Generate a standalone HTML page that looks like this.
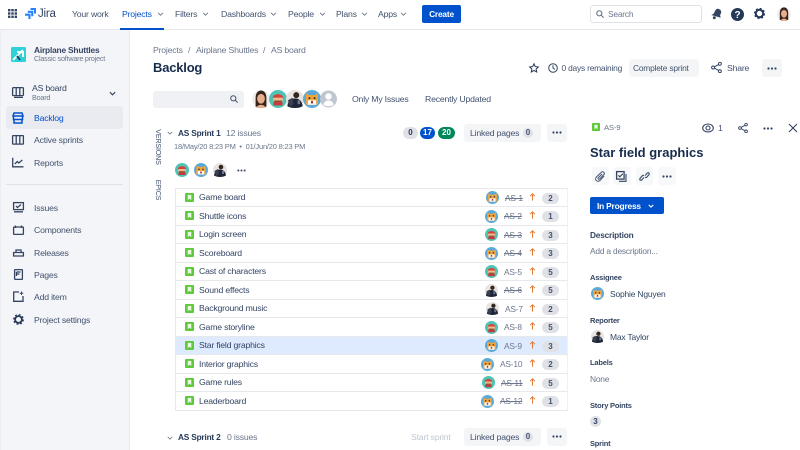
<!DOCTYPE html>
<html lang="en"><head><meta charset="utf-8"><title>Backlog</title>
<style>
*{box-sizing:border-box}
html,body{margin:0;padding:0;width:800px;height:450px;overflow:hidden;background:#fff}
body{font-family:"Liberation Sans",sans-serif;color:#42526e;position:relative}
.t{position:absolute;white-space:nowrap;line-height:12px;font-size:8.7px;letter-spacing:-.2px}
.s{color:#344563}
.m{color:#6b778c;font-size:8.4px}
.x{text-decoration:line-through}
.b{position:absolute;background:#f4f5f7;border-radius:3px}
svg{position:absolute;overflow:visible}
.ic{fill:none;stroke:#344563;stroke-width:1.3}
.row{position:absolute;left:175px;width:393px;height:18.5px;border-bottom:1px solid #e6e8ec;border-left:1px solid #e6e8ec;border-right:1px solid #eef0f3}
.pill{position:absolute;height:11px;width:17px;border-radius:6px;background:#dfe1e6;color:#42526e;font-size:8px;font-weight:bold;line-height:11px;text-align:center}
.cnt{position:absolute;height:12px;border-radius:6px;font-size:8px;font-weight:bold;line-height:12px;text-align:center}
.lab{font-weight:bold;font-size:7.5px;color:#344563}
.h{font-weight:bold;font-size:8.3px;color:#253858}
</style></head><body>
<svg width="0" height="0" style="position:absolute">
<defs>
<symbol id="cat" viewBox="0 0 14 14"><circle cx="7" cy="7" r="7" fill="#5ba9d6"/><path d="M2.300 2.500l2.500 1.500h4.400l2.500-1.500v9H2.300z" fill="#f2a33a"/><rect x="3.800" y="8" width="6.400" height="3.500" fill="#fff"/><circle cx="5" cy="6.300" r=".8" fill="#333"/><circle cx="9" cy="6.300" r=".8" fill="#333"/><rect x="6.200" y="8.500" width="1.600" height="2" fill="#a33"/></symbol>
<symbol id="mar" viewBox="0 0 14 14"><circle cx="7" cy="7" r="7" fill="#4fc4b5"/><path d="M2.800 6C3 2.400 11 2.400 11.200 6z" fill="#d6423a"/><rect x="3.300" y="6" width="7.400" height="3" fill="#f3b98c"/><rect x="4" y="8.200" width="6" height="1.200" fill="#8a4a32"/><path d="M3.500 9.400h7V12h-7z" fill="#c9393a"/></symbol>
<symbol id="pho" viewBox="0 0 14 14"><circle cx="7" cy="7" r="7" fill="#e7e4e2"/><path d="M1 12.500C1.500 8 4.500 6.500 7 6.500s5.500 1.500 6 6c-3 2-9 2-12 0z" fill="#1f2538"/><circle cx="8" cy="4" r="2.300" fill="#33261f"/><path d="M1.500 8l3.500-2 1 5-3 2z" fill="#3c3f52"/><rect x="9" y="8" width="2" height="3" fill="#70778a"/></symbol>
<symbol id="wom" viewBox="0 0 14 14"><circle cx="7" cy="7" r="7" fill="#f1efed"/><path d="M2.800 13V6c0-7.500 8.400-7.500 8.400 0v7z" fill="#38241c"/><ellipse cx="7" cy="6.800" rx="3" ry="3.800" fill="#e6b08f"/><path d="M3.500 14c.5-3.200 6.500-3.200 7 0z" fill="#e6b08f"/></symbol>
<symbol id="st" viewBox="0 0 9 9"><rect width="9" height="9" rx="1" fill="#5ec93a"/><path d="M2.700 1.900h3.600v5.200L4.500 5.800 2.700 7.100z" fill="#e9f8e2"/></symbol>
<symbol id="arr" viewBox="0 0 8 10"><path d="M4 9.500V1M1 4l3-3 3 3" fill="none" stroke="#e0762d" stroke-width="1.200"/></symbol>
<symbol id="dots" viewBox="0 0 10 3"><circle cx="1.500" cy="1.500" r="1.100" fill="#344563"/><circle cx="5" cy="1.500" r="1.100" fill="#344563"/><circle cx="8.500" cy="1.500" r="1.100" fill="#344563"/></symbol>
<symbol id="chev" viewBox="0 0 8 5"><path d="M1 1l3 3 3-3" fill="none" stroke="#6b778c" stroke-width="1.100"/></symbol>
<symbol id="share" viewBox="0 0 12 12"><circle cx="2.300" cy="6" r="1.600" fill="none" stroke="#344563" stroke-width="1.100"/><circle cx="9.700" cy="2" r="1.600" fill="none" stroke="#344563" stroke-width="1.100"/><circle cx="9.700" cy="10" r="1.600" fill="none" stroke="#344563" stroke-width="1.100"/><path d="M3.800 5.200l4.500-2.400M3.800 6.800l4.500 2.400" stroke="#344563" stroke-width="1.100"/></symbol>
</defs></svg>

<!-- top nav -->
<div style="position:absolute;left:0;top:0;width:800px;height:30px;border-bottom:1px solid #e6e8ec;background:#fff"></div>
<svg style="left:8px;top:9px" width="9" height="9" viewBox="0 0 9 9" fill="#344563"><rect width="2.400" height="2.400"/><rect x="3.300" width="2.400" height="2.400"/><rect x="6.600" width="2.400" height="2.400"/><rect y="3.300" width="2.400" height="2.400"/><rect x="3.300" y="3.300" width="2.400" height="2.400"/><rect x="6.600" y="3.300" width="2.400" height="2.400"/><rect y="6.600" width="2.400" height="2.400"/><rect x="3.300" y="6.600" width="2.400" height="2.400"/><rect x="6.600" y="6.600" width="2.400" height="2.400"/></svg>
<svg style="left:25px;top:8px" width="11" height="11" viewBox="0 0 11 11" fill="#2684ff"><path d="M5.500 0H11v5.500H9V2H5.500z"/><path d="M2.800 2.800h5.500v5.500H6.200V4.900H2.800z"/><path d="M0 5.600h5.500V11H3.400V7.700H0z"/></svg>
<div class="t s" style="left:38px;top:7px;font-size:11.500px;line-height:14px">Jira</div>
<div class="t" style="left:72px;top:8px">Your work</div>
<div class="t" style="left:122px;top:8px;color:#0052cc">Projects</div>
<svg style="left:157px;top:12px" width="7" height="4"><use href="#chev"/></svg>
<div style="position:absolute;left:120px;top:28px;width:44px;height:2px;background:#0052cc"></div>
<div class="t" style="left:175px;top:8px">Filters</div>
<svg style="left:202px;top:12px" width="7" height="4"><use href="#chev"/></svg>
<div class="t" style="left:221px;top:8px">Dashboards</div>
<svg style="left:270px;top:12px" width="7" height="4"><use href="#chev"/></svg>
<div class="t" style="left:288px;top:8px">People</div>
<svg style="left:319px;top:12px" width="7" height="4"><use href="#chev"/></svg>
<div class="t" style="left:336px;top:8px">Plans</div>
<svg style="left:361px;top:12px" width="7" height="4"><use href="#chev"/></svg>
<div class="t" style="left:378px;top:8px">Apps</div>
<svg style="left:400px;top:12px" width="7" height="4"><use href="#chev"/></svg>
<div style="position:absolute;left:422px;top:5px;width:39px;height:18px;background:#0052cc;border-radius:2px;color:#fff;font-size:8.400px;letter-spacing:-.2px;line-height:18px;text-align:center;font-weight:bold">Create</div>
<div style="position:absolute;left:590px;top:5px;width:112px;height:18px;border:1px solid #dfe1e6;border-radius:3px;background:#fff"></div>
<svg style="left:596px;top:10px" width="8" height="8" viewBox="0 0 8 8"><circle cx="3.300" cy="3.300" r="2.600" fill="none" stroke="#5e6c84"/><path d="M5.200 5.200L7.600 7.600" stroke="#5e6c84"/></svg>
<div class="t" style="left:608px;top:7.500px;font-size:8.400px;color:#6b778c">Search</div>
<svg style="left:710px;top:8px" width="12" height="12" viewBox="0 0 12 12" fill="#344563"><path d="M8 .8c2 .4 3.400 1.800 3.200 3.600-.1 1.300-1 1.700-1.100 3.200l.6 2.100L1.300 7l2.200-1.100C5 4.200 5.200.4 8 .8z"/><circle cx="4.300" cy="9.800" r="1.500"/></svg>
<svg style="left:731px;top:8px" width="13" height="13" viewBox="0 0 13 13"><circle cx="6.500" cy="6.500" r="6.500" fill="#253858"/><text x="6.500" y="10" font-size="10" font-weight="bold" fill="#fff" text-anchor="middle" font-family="Liberation Sans">?</text></svg>
<svg style="left:754px;top:8px" width="11" height="11" viewBox="0 0 11 11"><circle cx="5.500" cy="5.500" r="3.700" fill="none" stroke="#253858" stroke-width="2"/><circle cx="5.500" cy="5.500" r="5" fill="none" stroke="#253858" stroke-width="1.200" stroke-dasharray="2 1.930"/></svg>
<svg style="left:777px;top:7px" width="14" height="14"><use href="#wom"/></svg>

<!-- sidebar -->
<div style="position:absolute;left:0;top:30px;width:130px;height:420px;background:#f4f5f8;border-left:1px solid #eceef1;border-right:1px solid #e6e8ec"></div>
<svg style="left:11px;top:47px" width="15" height="15" viewBox="0 0 15 15"><rect width="15" height="15" rx="1.500" fill="#2fd0d8"/><path d="M2 13L12 3M6 5h6v5" stroke="#fff" stroke-width="1.800" fill="none"/><path d="M6 9l3 4" stroke="#253858" stroke-width="1.800"/></svg>
<div class="t" style="left:34px;top:44px;font-size:8.400px;color:#344563;font-weight:bold">Airplane Shuttles</div>
<div class="t" style="left:34px;top:53px;font-size:7.200px;color:#6b778c">Classic software project</div>
<svg class="ic" style="left:12px;top:87px" width="12" height="11" viewBox="0 0 12 11"><rect x=".6" y=".6" width="10.800" height="8" rx="1"/><path d="M4.200 .6v8M7.800 .6v8M2 10.400h9"/></svg>
<div class="t s" style="left:32px;top:82px">AS board</div>
<div class="t" style="left:32px;top:92px;font-size:7.200px;color:#6b778c">Board</div>
<svg style="left:109px;top:91px" width="7" height="5" viewBox="0 0 8 5"><path d="M1 1l3 3 3-3" fill="none" stroke="#344563" stroke-width="1.300"/></svg>
<div style="position:absolute;left:6px;top:106px;width:117px;height:23px;background:#e9ebf0;border-radius:3px"></div>
<svg style="left:12px;top:112px" width="12" height="12" viewBox="0 0 12 12" fill="none" stroke="#0052cc" stroke-width="1.500"><path d="M2 1h8l1 3H1zM1.500 4.500v3h9v-3M2 7.500V11h8V7.500"/></svg>
<div class="t" style="left:34px;top:112px;color:#0052cc">Backlog</div>
<svg class="ic" style="left:12px;top:135px" width="12" height="10" viewBox="0 0 12 10"><rect x=".6" y=".6" width="10.800" height="8.500" rx=".5"/><path d="M4.200 .6v8.500M7.800 .6v8.500"/></svg>
<div class="t" style="left:34px;top:134px">Active sprints</div>
<svg class="ic" style="left:12px;top:157px" width="12" height="11" viewBox="0 0 12 11"><path d="M.7 .8V9.800H11.500M2.800 7l2.500-2.500 1.500 1.500 3.500-3"/></svg>
<div class="t" style="left:34px;top:157px">Reports</div>
<div style="position:absolute;left:6px;top:184px;width:117px;height:1px;background:#dfe1e6"></div>
<svg class="ic" style="left:13px;top:202px" width="11" height="11" viewBox="0 0 11 11"><rect x=".6" y=".6" width="9.800" height="7"/><path d="M3 4l1.500 1.500L8 2.500M1 9.800h9"/></svg>
<div class="t" style="left:34px;top:202px">Issues</div>
<svg class="ic" style="left:13px;top:225px" width="11" height="10" viewBox="0 0 11 10"><rect x=".6" y="2" width="9.800" height="7.400" rx=".6"/><path d="M2.500 .5v2.500M8.500 .5v2.500"/></svg>
<div class="t" style="left:34px;top:224px">Components</div>
<svg class="ic" style="left:13px;top:248px" width="11" height="9" viewBox="0 0 11 9"><path d="M.6 4.500h9.800v3.500H.6zM3 4.500V2h5v2.500"/></svg>
<div class="t" style="left:34px;top:247px">Releases</div>
<svg class="ic" style="left:14px;top:269px" width="9" height="11" viewBox="0 0 9 11"><rect x=".6" y=".6" width="7.800" height="9.800" rx=".6"/><path d="M2.500 3h4M2.500 5h3M2.500 3v4"/></svg>
<div class="t" style="left:34px;top:269px">Pages</div>
<svg class="ic" style="left:13px;top:291px" width="11" height="11" viewBox="0 0 11 11"><path d="M6 1H.7v9.300H10V5"/><path d="M8.500 .5v3.500M6.800 2.200h3.500" stroke-width="1"/></svg>
<div class="t" style="left:34px;top:291px">Add item</div>
<svg style="left:13px;top:314px" width="11" height="11" viewBox="0 0 11 11"><circle cx="5.500" cy="5.500" r="3.400" fill="none" stroke="#253858" stroke-width="1.800"/><circle cx="5.500" cy="5.500" r="4.800" fill="none" stroke="#253858" stroke-width="1.200" stroke-dasharray="2 1.770"/></svg>
<div class="t" style="left:34px;top:314px">Project settings</div>

<!-- header -->
<div class="t" style="left:153px;top:44px;color:#6b778c">Projects</div>
<div class="t" style="left:188px;top:44px;color:#6b778c">/</div>
<div class="t" style="left:196px;top:44px;color:#6b778c">Airplane Shuttles</div>
<div class="t" style="left:263px;top:44px;color:#6b778c">/</div>
<div class="t" style="left:271px;top:44px;color:#6b778c">AS board</div>
<div class="t" style="left:153px;top:59px;font-size:13px;line-height:17px;color:#172b4d;font-weight:bold">Backlog</div>
<svg style="left:529px;top:63px" width="10" height="10" viewBox="0 0 10 10"><path d="M5 .8l1.300 2.800 3 .4-2.200 2 .6 3L5 7.500 2.300 9l.6-3-2.200-2 3-.4z" fill="none" stroke="#253858" stroke-width="1"/></svg>
<svg style="left:548px;top:63px" width="10" height="10" viewBox="0 0 10 10"><circle cx="5" cy="5" r="4.300" fill="none" stroke="#344563"/><path d="M5 2.300V5l1.800 1.300" fill="none" stroke="#344563"/></svg>
<div class="t" style="left:561.500px;top:62px;font-size:8.400px">0 days remaining</div>
<div class="b" style="left:629px;top:59px;width:70px;height:18px"></div>
<div class="t" style="left:633px;top:62px;font-size:8.400px">Complete sprint</div>
<svg style="left:711px;top:62px" width="11" height="11"><use href="#share"/></svg>
<div class="t" style="left:727px;top:62px">Share</div>
<div class="b" style="left:762px;top:59px;width:20px;height:18px"></div>
<svg style="left:767px;top:66.500px" width="10" height="3"><use href="#dots"/></svg>

<!-- filters -->
<div class="b" style="left:153px;top:91px;width:91px;height:17px;background:#f0f1f4"></div>
<svg style="left:230px;top:95px" width="8" height="8" viewBox="0 0 8 8"><circle cx="3.300" cy="3.300" r="2.600" fill="none" stroke="#42526e"/><path d="M5.200 5.200L7.600 7.600" stroke="#42526e"/></svg>
<svg style="left:252px;top:90px" width="18" height="18"><use href="#wom"/></svg>
<svg style="left:269px;top:90px" width="18" height="18"><use href="#mar"/></svg>
<svg style="left:286px;top:90px" width="18" height="18"><use href="#pho"/></svg>
<svg style="left:303px;top:90px" width="18" height="18"><use href="#cat"/></svg>
<svg style="left:320px;top:90px" width="17" height="18" viewBox="0 0 17 18"><circle cx="8.500" cy="9" r="8.500" fill="#c1c7d0"/><circle cx="8.500" cy="6.500" r="3.200" fill="#fff"/><path d="M3.500 15c0-6 10-6 10 0-3 1.600-7 1.600-10 0z" fill="#fff"/></svg>
<div class="t" style="left:352px;top:93px">Only My Issues</div>
<div class="t" style="left:425px;top:93px">Recently Updated</div>

<!-- sprint 1 -->
<div class="t" style="left:138px;top:140.500px;width:40px;font-size:7.200px;transform:rotate(90deg);text-align:center">VERSIONS</div>
<div class="t" style="left:143px;top:184px;width:30px;font-size:7.200px;transform:rotate(90deg);text-align:center">EPICS</div>
<svg style="left:167px;top:131px" width="6" height="4"><use href="#chev"/></svg>
<div class="t h" style="left:178px;top:127px">AS Sprint 1</div>
<div class="t" style="left:226px;top:127px;color:#6b778c">12 issues</div>
<div class="t" style="left:174px;top:141px;font-size:7.500px;color:#6b778c">18/May/20 8:23 PM &nbsp;•&nbsp; 01/Jun/20 8:23 PM</div>
<svg style="left:175px;top:163px" width="14" height="14"><use href="#mar"/></svg>
<svg style="left:194px;top:163px" width="14" height="14"><use href="#cat"/></svg>
<svg style="left:213px;top:163px" width="14" height="14"><use href="#pho"/></svg>
<svg style="left:237px;top:168.500px" width="9" height="3"><use href="#dots"/></svg>
<div class="cnt" style="left:403px;top:127px;width:15px;background:#dfe1e6;color:#253858">0</div>
<div class="cnt" style="left:420px;top:127px;width:15px;background:#0052cc;color:#fff">17</div>
<div class="cnt" style="left:438px;top:127px;width:17px;background:#00875a;color:#fff">20</div>
<div class="b" style="left:464px;top:124px;width:77px;height:18px"></div>
<div class="t" style="left:470px;top:127px">Linked pages</div>
<div class="cnt" style="left:523px;top:128px;width:10px;height:10px;line-height:10px;background:#dfe1e6;color:#42526e">0</div>
<div class="b" style="left:547px;top:124px;width:20px;height:18px"></div>
<svg style="left:552px;top:131px" width="10" height="3"><use href="#dots"/></svg>

<!-- table -->
<div style="position:absolute;left:175px;top:188px;width:393px;height:1px;background:#e6e8ec"></div>
<div class="row" style="top:188.500px"></div>
<div class="row" style="top:207px"></div>
<div class="row" style="top:225.500px"></div>
<div class="row" style="top:244px"></div>
<div class="row" style="top:262.500px"></div>
<div class="row" style="top:281px"></div>
<div class="row" style="top:299.500px"></div>
<div class="row" style="top:318px"></div>
<div class="row" style="top:336.500px;background:#deebff"></div>
<div class="row" style="top:355px"></div>
<div class="row" style="top:373.500px"></div>
<div class="row" style="top:392px"></div>

<svg style="left:185px;top:193px" width="9" height="9"><use href="#st"/></svg><div class="t s" style="left:199px;top:191px">Game board</div>
<svg style="left:185px;top:211px" width="9" height="9"><use href="#st"/></svg><div class="t s" style="left:199px;top:210px">Shuttle icons</div>
<svg style="left:185px;top:230px" width="9" height="9"><use href="#st"/></svg><div class="t s" style="left:199px;top:228px">Login screen</div>
<svg style="left:185px;top:248px" width="9" height="9"><use href="#st"/></svg><div class="t s" style="left:199px;top:247px">Scoreboard</div>
<svg style="left:185px;top:267px" width="9" height="9"><use href="#st"/></svg><div class="t s" style="left:199px;top:265px">Cast of characters</div>
<svg style="left:185px;top:285px" width="9" height="9"><use href="#st"/></svg><div class="t s" style="left:199px;top:284px">Sound effects</div>
<svg style="left:185px;top:304px" width="9" height="9"><use href="#st"/></svg><div class="t s" style="left:199px;top:302px">Background music</div>
<svg style="left:185px;top:322px" width="9" height="9"><use href="#st"/></svg><div class="t s" style="left:199px;top:321px">Game storyline</div>
<svg style="left:185px;top:341px" width="9" height="9"><use href="#st"/></svg><div class="t s" style="left:199px;top:339px">Star field graphics</div>
<svg style="left:185px;top:359px" width="9" height="9"><use href="#st"/></svg><div class="t s" style="left:199px;top:358px">Interior graphics</div>
<svg style="left:185px;top:378px" width="9" height="9"><use href="#st"/></svg><div class="t s" style="left:199px;top:376px">Game rules</div>
<svg style="left:185px;top:396px" width="9" height="9"><use href="#st"/></svg><div class="t s" style="left:199px;top:395px">Leaderboard</div>

<svg style="left:486px;top:191px" width="13" height="13"><use href="#cat"/></svg><div class="t m x" style="left:505px;top:192px">AS-1</div><svg style="left:529px;top:193px" width="7" height="8"><use href="#arr"/></svg><div class="pill" style="left:542px;top:192.500px">2</div>
<svg style="left:485px;top:210px" width="13" height="13"><use href="#cat"/></svg><div class="t m x" style="left:504px;top:210px">AS-2</div><svg style="left:529px;top:211px" width="7" height="8"><use href="#arr"/></svg><div class="pill" style="left:542px;top:211px">1</div>
<svg style="left:485px;top:228px" width="13" height="13"><use href="#mar"/></svg><div class="t m x" style="left:504px;top:229px">AS-3</div><svg style="left:529px;top:230px" width="7" height="8"><use href="#arr"/></svg><div class="pill" style="left:542px;top:229.500px">3</div>
<svg style="left:485px;top:247px" width="13" height="13"><use href="#cat"/></svg><div class="t m x" style="left:504px;top:247px">AS-4</div><svg style="left:529px;top:248px" width="7" height="8"><use href="#arr"/></svg><div class="pill" style="left:542px;top:248px">3</div>
<svg style="left:485px;top:265px" width="13" height="13"><use href="#mar"/></svg><div class="t m" style="left:504px;top:266px">AS-5</div><svg style="left:529px;top:267px" width="7" height="8"><use href="#arr"/></svg><div class="pill" style="left:542px;top:266.500px">5</div>
<svg style="left:485px;top:284px" width="13" height="13"><use href="#pho"/></svg><div class="t m x" style="left:504px;top:284px">AS-6</div><svg style="left:529px;top:285px" width="7" height="8"><use href="#arr"/></svg><div class="pill" style="left:542px;top:285px">5</div>
<svg style="left:486px;top:302px" width="13" height="13"><use href="#pho"/></svg><div class="t m" style="left:505px;top:303px">AS-7</div><svg style="left:529px;top:304px" width="7" height="8"><use href="#arr"/></svg><div class="pill" style="left:542px;top:303.500px">2</div>
<svg style="left:485px;top:321px" width="13" height="13"><use href="#mar"/></svg><div class="t m" style="left:504px;top:321px">AS-8</div><svg style="left:529px;top:322px" width="7" height="8"><use href="#arr"/></svg><div class="pill" style="left:542px;top:322px">5</div>
<svg style="left:485px;top:339px" width="13" height="13"><use href="#cat"/></svg><div class="t m" style="left:504px;top:340px">AS-9</div><svg style="left:529px;top:341px" width="7" height="8"><use href="#arr"/></svg><div class="pill" style="left:542px;top:340.500px">3</div>
<svg style="left:481px;top:358px" width="13" height="13"><use href="#cat"/></svg><div class="t m" style="left:500px;top:358px">AS-10</div><svg style="left:529px;top:359px" width="7" height="8"><use href="#arr"/></svg><div class="pill" style="left:542px;top:359px">2</div>
<svg style="left:482px;top:376px" width="13" height="13"><use href="#mar"/></svg><div class="t m x" style="left:501px;top:377px">AS-11</div><svg style="left:529px;top:378px" width="7" height="8"><use href="#arr"/></svg><div class="pill" style="left:542px;top:377.500px">5</div>
<svg style="left:481px;top:395px" width="13" height="13"><use href="#cat"/></svg><div class="t m x" style="left:500px;top:395px">AS-12</div><svg style="left:529px;top:396px" width="7" height="8"><use href="#arr"/></svg><div class="pill" style="left:542px;top:396px">1</div>

<!-- sprint 2 -->
<svg style="left:167px;top:436px" width="6" height="4"><use href="#chev"/></svg>
<div class="t h" style="left:178px;top:431px">AS Sprint 2</div>
<div class="t" style="left:227px;top:431px;color:#6b778c">0 issues</div>
<div class="t" style="left:411px;top:431px;color:#c1c7d0">Start sprint</div>
<div class="b" style="left:464px;top:428px;width:77px;height:18px"></div>
<div class="t" style="left:470px;top:431px">Linked pages</div>
<div class="cnt" style="left:523px;top:432px;width:10px;height:10px;line-height:10px;background:#dfe1e6;color:#42526e">0</div>
<div class="b" style="left:547px;top:428px;width:20px;height:18px"></div>
<svg style="left:552px;top:435px" width="10" height="3"><use href="#dots"/></svg>

<!-- detail panel -->
<svg style="left:592px;top:123px" width="8" height="8"><use href="#st"/></svg>
<div class="t" style="left:604px;top:122px;font-size:7.700px;color:#6b778c">AS-9</div>
<svg style="left:702px;top:123px" width="12" height="10" viewBox="0 0 12 10"><ellipse cx="6" cy="5" rx="5.300" ry="4" fill="none" stroke="#344563" stroke-width="1.100"/><circle cx="6" cy="5" r="2" fill="none" stroke="#344563" stroke-width="1.100"/></svg>
<div class="t" style="left:718px;top:122px;color:#42526e">1</div>
<svg style="left:738px;top:123px" width="10" height="10"><use href="#share"/></svg>
<svg style="left:763px;top:127px" width="10" height="3"><use href="#dots"/></svg>
<svg style="left:788px;top:123px" width="10" height="10" viewBox="0 0 10 10"><path d="M1 1l8 8M9 1l-8 8" stroke="#344563" stroke-width="1.100"/></svg>
<div class="t" style="left:590px;top:145px;font-size:13px;line-height:16px;color:#172b4d;font-weight:bold;letter-spacing:0">Star field graphics</div>
<div class="b" style="left:592px;top:167px;width:17px;height:18px;background:#f7f8f9"></div>
<div class="b" style="left:613px;top:167px;width:18px;height:18px;background:#f7f8f9"></div>
<div class="b" style="left:636px;top:167px;width:17px;height:18px;background:#f7f8f9"></div>
<div class="b" style="left:658px;top:167px;width:18px;height:18px;background:#f7f8f9"></div>
<svg style="left:595px;top:171px" width="11" height="11" viewBox="0 0 11 11"><path d="M9 5L5 9.500c-1 1-3 1-3.800 0s-.8-2.500.2-3.500L6.300 1.300c.8-.8 2-.8 2.600 0s.6 1.800-.2 2.500L4.500 8c-.5.400-1 .4-1.300 0s-.3-.8 0-1.200L7 3" fill="none" stroke="#42526e" stroke-width="1"/></svg>
<svg class="ic" style="left:616px;top:171px" width="11" height="11" viewBox="0 0 11 11"><rect x=".6" y=".6" width="7.500" height="7.500"/><path d="M2.300 4.300l1.500 1.500 3-3M10 3v7.300H3" stroke-width="1.100"/></svg>
<svg style="left:639px;top:171px" width="11" height="11" viewBox="0 0 11 11" fill="none" stroke="#42526e" stroke-width="1.200"><path d="M4.800 6.500L3 8.700c-.8.900-1.700.700-2 .2s-.4-1 .2-1.700l2-2.300c.6-.7 1.300-.6 1.800-.1M6.200 4.500L8 2.300c.8-.9 1.700-.7 2-.2s.4 1-.2 1.700l-2 2.300c-.6.700-1.300.6-1.800.1"/></svg>
<svg style="left:662px;top:175px" width="10" height="3"><use href="#dots"/></svg>
<div style="position:absolute;left:590px;top:197px;width:74px;height:17px;background:#0052cc;border-radius:2px"></div>
<div class="t" style="left:597px;top:199.500px;font-size:8.400px;color:#fff;font-weight:bold">In Progress</div>
<svg style="left:648px;top:204px" width="6" height="4" viewBox="0 0 8 5"><path d="M1 1l3 3 3-3" fill="none" stroke="#fff" stroke-width="1.500"/></svg>
<div class="t lab" style="left:590px;top:229px;font-size:8.300px">Description</div>
<div class="t" style="left:590px;top:245px;font-size:8.400px;color:#6b778c">Add a description...</div>
<div class="t lab" style="left:590px;top:271.500px">Assignee</div>
<svg style="left:591px;top:287px" width="13" height="13"><use href="#cat"/></svg>
<div class="t s" style="left:610px;top:288px;font-size:8.500px">Sophie Nguyen</div>
<div class="t lab" style="left:590px;top:314.500px">Reporter</div>
<svg style="left:591px;top:330px" width="13" height="13"><use href="#pho"/></svg>
<div class="t s" style="left:610px;top:331px;font-size:8.500px">Max Taylor</div>
<div class="t lab" style="left:590px;top:357px">Labels</div>
<div class="t" style="left:590px;top:373px;font-size:8.400px;color:#6b778c">None</div>
<div class="t lab" style="left:590px;top:399.500px">Story Points</div>
<div class="pill" style="left:590px;top:416px;width:11px;color:#344563">3</div>
<div class="t lab" style="left:590px;top:437.500px">Sprint</div>
</body></html>
